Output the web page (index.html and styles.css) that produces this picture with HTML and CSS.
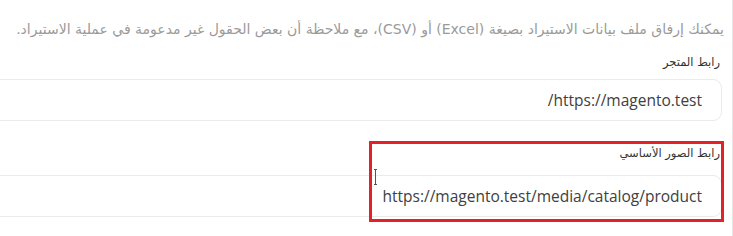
FILE: index.html
```html
<!DOCTYPE html>
<html lang="ar" dir="rtl">
<head>
<meta charset="utf-8">
<link rel="stylesheet" href="styles.css">
</head>
<body>
<div class="panel">
  <p class="hint">يمكنك إرفاق ملف بيانات الاستيراد بصيغة (Excel) أو (CSV)، مع ملاحظة أن بعض الحقول غير مدعومة في عملية الاستيراد.</p>
  <div class="field">
    <label class="label">رابط المتجر</label>
    <div class="input"><span class="value">https://magento.test/</span></div>
  </div>
  <div class="field second">
    <label class="label">رابط الصور الأساسي</label>
    <div class="input"><span class="value">https://magento.test/media/catalog/product</span></div>
  </div>
  <div class="highlight"></div>
  <div class="cursor"></div>
</div>
</body>
</html>
```

FILE: styles.css
```css
html, body {
  margin: 0;
  padding: 0;
  background: #ffffff;
  overflow: hidden;
}
body {
  width: 733px;
  height: 236px;
  font-family: "DejaVu Sans", "Noto Sans", sans-serif;
}
.panel {
  position: relative;
  height: 236px;
  border-right: 1px solid #e6e6e6;
  box-sizing: border-box;
  padding: 18px 10px 0 0;
  margin-left: -20px;
  width: 750px;
}
.hint {
  margin: 0 -2px 0 0;
  font-size: 14px;
  color: #9a9a9a;
  line-height: 22px;
  white-space: nowrap;
}
.field {
  display: flex;
  flex-direction: column;
}
.label {
  font-size: 11.5px;
  color: #333333;
  line-height: 16px;
  margin-top: 14px;
  margin-bottom: 9px;
  padding-right: 2px;
}
.second .label {
  margin-top: 24px;
  margin-bottom: 14px;
}
.input {
  height: 42px;
  box-sizing: border-box;
  border: 1px solid #ebebeb;
  border-radius: 9px;
  display: flex;
  align-items: center;
  padding-right: 19px;
}
.value {
  font-family: "Open Sans", "Noto Sans", sans-serif;
  font-size: 15.5px;
  color: #404040;
}
.highlight {
  position: absolute;
  left: 386px;
  top: 141px;
  width: 355px;
  height: 81px;
  box-sizing: border-box;
  border: 3px solid #e32227;
}
.cursor {
  position: absolute;
  left: 391px;
  top: 169px;
  width: 3px;
  height: 16px;
  box-sizing: border-box;
  border: 1px solid #555;
  border-left: none;
  border-right: none;
}
.cursor::after {
  content: "";
  position: absolute;
  left: 1px;
  top: 0;
  width: 1px;
  height: 14px;
  background: #555;
}
```
